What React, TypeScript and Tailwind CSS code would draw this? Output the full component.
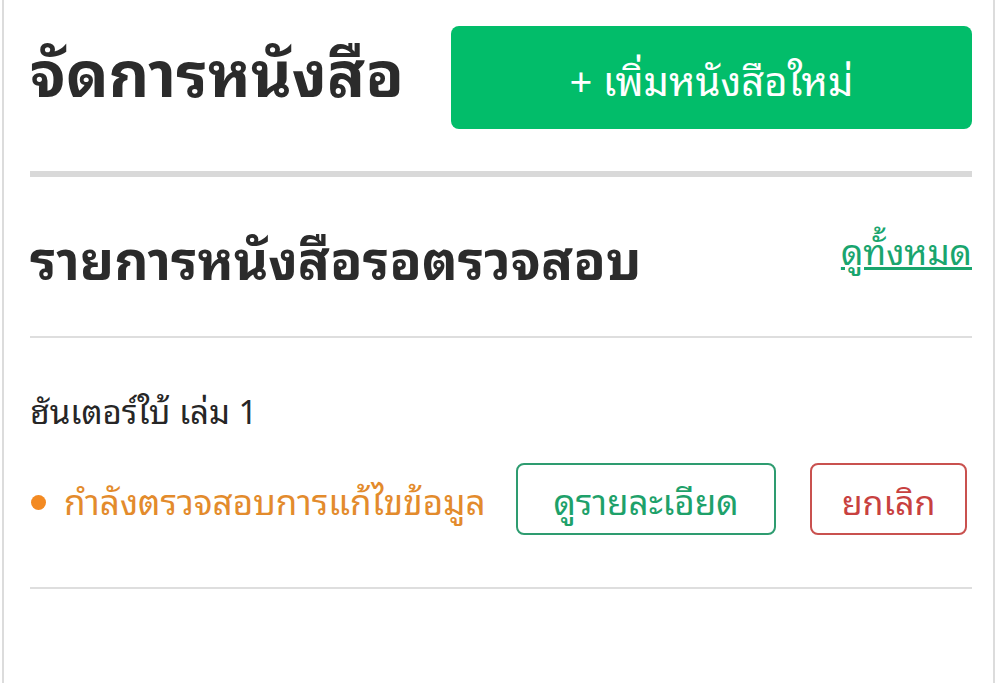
import React from "react";

const thai = { fontFamily: '"Noto Sans Thai Looped", "Noto Serif Thai", "Noto Sans Thai", "Noto Sans", sans-serif' };

export default function App() {
  return (
    <div className="w-[1000px] h-[683px] bg-white overflow-hidden" style={thai}>
      <div className="mx-[2px] mr-[5px] h-full border-l-2 border-r-2 border-[#dcdcdc] px-[26px] pr-[21px]">
        {/* Header */}
        <div className="flex items-center justify-between pt-[26px]">
          <h1 className="text-[63px] font-bold text-[#2b2b2b] leading-none pb-[18px]">จัดการหนังสือ</h1>
          <button className="w-[521px] h-[103px] rounded-lg bg-[#02bd6a] text-white text-[40px] flex items-center justify-center">
            + เพิ่มหนังสือใหม่
          </button>
        </div>
        <div className="mt-[42px] h-[6px] bg-[#d9d9d9]" />

        {/* Pending list */}
        <div className="h-[161px] flex items-start justify-between pt-[48px] border-b-2 border-[#dedede]">
          <h2 className="text-[53px] font-bold text-[#2b2b2b] leading-[64px]">รายการหนังสือรอตรวจสอบ</h2>
          <a href="#" className="text-[35px] text-[#19a56e] underline leading-[44px] mt-[2px]">ดูทั้งหมด</a>
        </div>

        <div className="h-[251px] pt-[52px] border-b-2 border-[#dedede]">
          <div className="text-[33px] text-[#262626] leading-[40px]">ฮันเตอร์ใบ้ เล่ม 1</div>
          <div className="flex items-center mt-[33px]">
            <span className="w-[15px] h-[15px] rounded-full bg-[#f38a22] mt-[6px] ml-[1px] mr-[18px]" />
            <span className="text-[35px] text-[#e38b2c] flex-1">กำลังตรวจสอบการแก้ไขข้อมูล</span>
            <button className="w-[260px] h-[72px] rounded-lg border-2 border-[#2e9c70] text-[#1ea16a] text-[35px]">
              ดูรายละเอียด
            </button>
            <button className="ml-[34px] mr-[5px] w-[157px] h-[72px] rounded-lg border-2 border-[#c9514f] text-[#c8413f] text-[34px]">
              ยกเลิก
            </button>
          </div>
        </div>
      </div>
    </div>
  );
}
